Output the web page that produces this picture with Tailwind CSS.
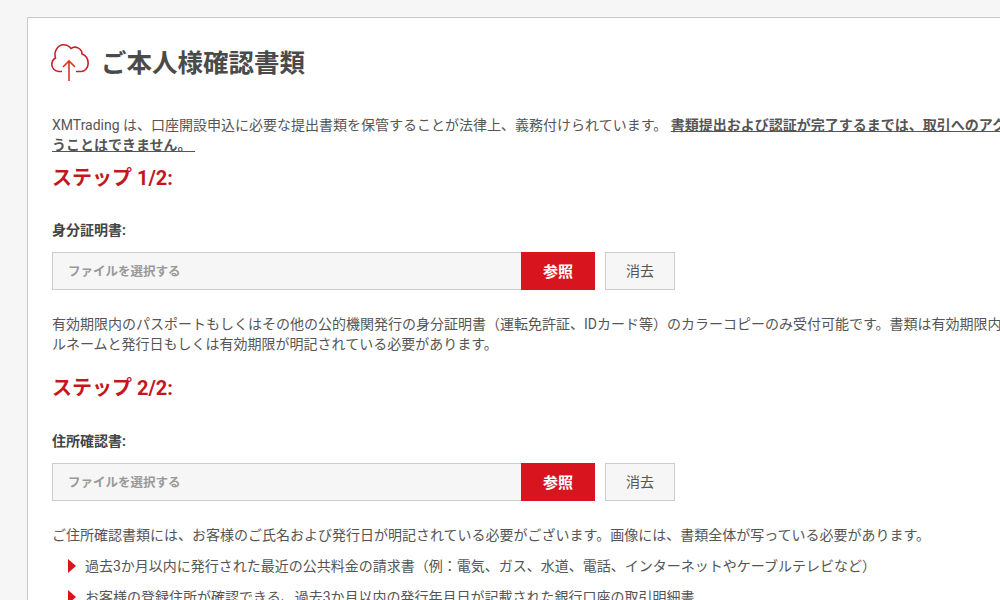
<!DOCTYPE html>
<html lang="ja">
<head>
  <meta charset="UTF-8" />
  <meta name="viewport" content="width=device-width, initial-scale=1.0" />
  <title>ご本人様確認書類</title>
  <script src="https://cdn.jsdelivr.net/npm/@tailwindcss/browser@4"></script>
</head>
<body class="bg-[#f6f6f6] h-[600px] overflow-hidden font-['Roboto','Noto_Sans_CJK_JP',sans-serif] text-[14px] leading-[20px] text-[#555]">
  <div class="ml-[27px] mt-[17px] w-[973px] h-[583px] overflow-hidden bg-white border-l border-t border-[#c8c8c8] pl-[24px] pt-[26px]">
    <div class="flex items-start h-[42px]">
      <svg class="-ml-[1px] w-[38px] h-[38px] text-[#c8202a]" viewBox="0 0 38 38" fill="none" stroke="currentColor" stroke-width="1.6">
        <path d="M11 27.500H8C3.500 27.500 .8 24 .8 20.500C.8 17.500 2 15.500 4.500 14C2.500 8 6.500 .8 12.500 .8C15.500 .8 18 2 20 4.500C24 1.500 31 4 31 10C35 11.500 37.200 15 37.200 19.500C37.200 24 33.500 27.500 30 27.500H25"/>
        <path d="M18 37V17M12 23L18 17L24 23" stroke="#e0301e"/>
      </svg>
      <h1 class="ml-[12px] text-[25.5px] leading-[38px] font-bold text-[#4a4a4a]">ご本人様確認書類</h1>
    </div>

    <p class="mt-[29px] w-[1100px]">XMTrading は、口座開設申込に必要な提出書類を保管することが法律上、義務付けられています。 <span class="font-bold underline">書類提出および認証が完了するまでは、取引へのアクセスを行<br />うことはできません。&nbsp;</span></p>

    <h2 class="mt-[9px] text-[20px] leading-[28px] font-bold text-[#c4161c]">ステップ 1/2:</h2>

    <label class="block mt-[28px] font-bold text-[#444]">身分証明書:</label>
    <div class="flex mt-[12px]">
      <div class="w-[469px] h-[38px] pl-[15px] pt-[2px] flex items-center bg-[#f6f6f6] border border-[#ccc] border-r-0 font-bold text-[12.5px] text-[#999]">ファイルを選択する</div>
      <button class="w-[74px] h-[38px] pt-[1px] bg-[#d8151f] text-white font-bold text-[15px]">参照</button>
      <button class="ml-[10px] w-[70px] h-[38px] bg-[#f6f6f6] border border-[#ccc] text-[#555]">消去</button>
    </div>

    <p class="mt-[24px] w-[1100px]">有効期限内のパスポートもしくはその他の公的機関発行の身分証明書（運転免許証、IDカード等）のカラーコピーのみ受付可能です。書類は有効期限内で、お客様のフ<br />ルネームと発行日もしくは有効期限が明記されている必要があります。</p>

    <h2 class="mt-[20px] text-[20px] leading-[28px] font-bold text-[#c4161c]">ステップ 2/2:</h2>

    <label class="block mt-[29px] font-bold text-[#444]">住所確認書:</label>
    <div class="flex mt-[12px]">
      <div class="w-[469px] h-[38px] pl-[15px] pt-[2px] flex items-center bg-[#f6f6f6] border border-[#ccc] border-r-0 font-bold text-[12.5px] text-[#999]">ファイルを選択する</div>
      <button class="w-[74px] h-[38px] pt-[1px] bg-[#d8151f] text-white font-bold text-[15px]">参照</button>
      <button class="ml-[10px] w-[70px] h-[38px] bg-[#f6f6f6] border border-[#ccc] text-[#555]">消去</button>
    </div>

    <p class="mt-[24px]">ご住所確認書類には、お客様のご氏名および発行日が明記されている必要がございます。画像には、書類全体が写っている必要があります。</p>

    <ul class="mt-[11px] flex flex-col gap-[11px]">
      <li class="flex items-center pl-[16px]">
        <span class="w-0 h-0 border-y-[7px] border-y-transparent border-l-[8px] border-l-[#d9141c] mr-[9px]"></span>
        過去3か月以内に発行された最近の公共料金の請求書（例：電気、ガス、水道、電話、インターネットやケーブルテレビなど）
      </li>
      <li class="flex items-center pl-[16px]">
        <span class="w-0 h-0 border-y-[7px] border-y-transparent border-l-[8px] border-l-[#d9141c] mr-[9px]"></span>
        お客様の登録住所が確認できる、過去3か月以内の発行年月日が記載された銀行口座の取引明細書
      </li>
    </ul>
  </div>
</body>
</html>
